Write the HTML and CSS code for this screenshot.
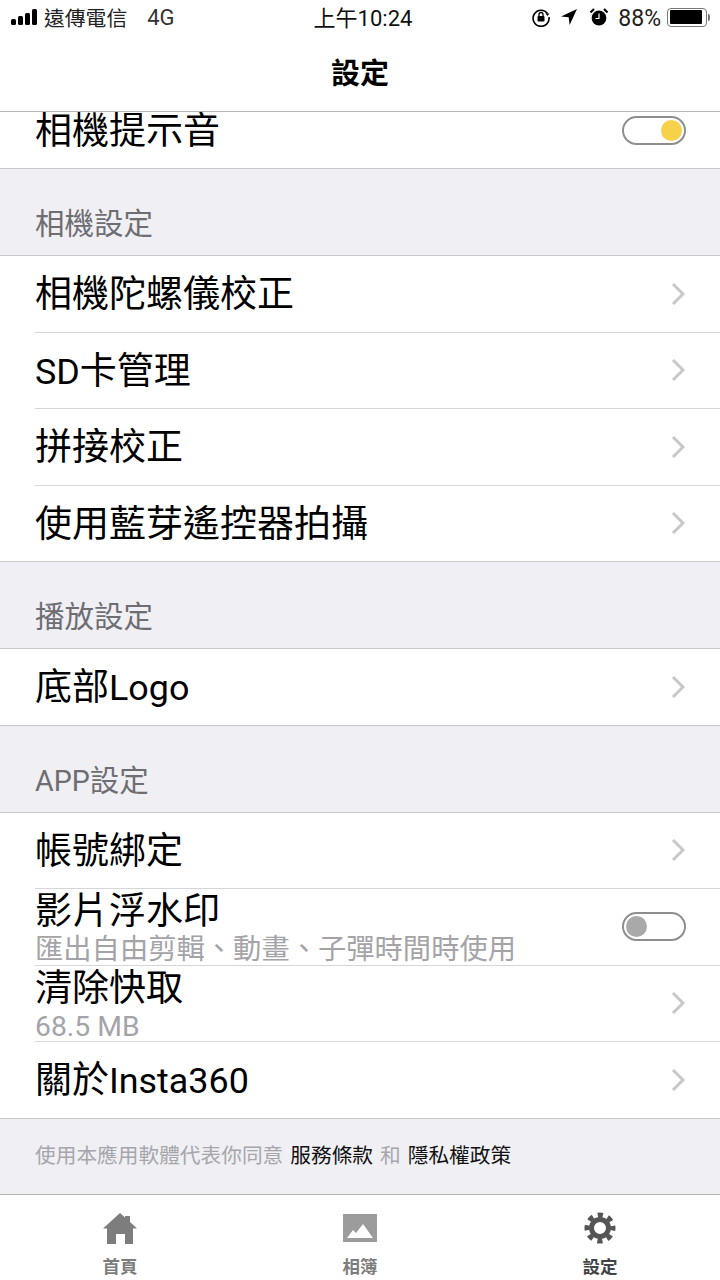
FILE: index.html
```html
<!DOCTYPE html>
<html lang="zh-Hant">
<head>
    <meta charset="UTF-8">
    <title>設定</title>
    <link rel="stylesheet" href="styles.css">
</head>
<body>
    <div class="status-bar">
        <div class="status-left">
            <div class="signal"><i class="s1"></i><i class="s2"></i><i class="s3"></i><i class="s4"></i></div>
            <span class="carrier">遠傳電信</span>
            <span class="network">4G</span>
        </div>
        <div class="status-time">上午10:24</div>
        <div class="status-right">
            <svg class="st-lock" width="20" height="20" viewBox="0 0 20 20"><path d="M16.5 6.500A8 8 0 1 0 18 10" fill="none" stroke="#000" stroke-width="1.6"/><path d="M14.500 6.500h4l-2 2.500z" fill="#000"/><rect x="6.500" y="9" width="7" height="5.500" rx="1" fill="#000"/><path d="M8 9V7.500a2 2 0 0 1 4 0V9" fill="none" stroke="#000" stroke-width="1.3"/></svg>
            <svg class="st-loc" width="18" height="18" viewBox="0 0 18 18"><path d="M17 1 1 8.500l7.700.8.9 7.700z" fill="#000"/></svg>
            <svg class="st-alarm" width="20" height="20" viewBox="0 0 20 20"><circle cx="10" cy="11" r="7.400" fill="#000"/><path d="M1.500 5.500 5 2M18.500 5.500 15 2" stroke="#000" stroke-width="2.2"/><path d="M10 6.500V11.500H6.500" fill="none" stroke="#fff" stroke-width="1.2"/></svg>
            <span class="battery-pct">88%</span>
            <div class="battery"><div class="battery-fill"></div></div>
            <div class="battery-tip"></div>
        </div>
    </div>

    <header class="nav-bar">設定</header>

    <div class="rows rows-cut">
        <div class="row row-clipped">
            <span class="row-title">相機提示音</span>
            <div class="toggle toggle-on"><i></i></div>
        </div>
    </div>

    <div class="section-head">相機設定</div>
    <div class="rows">
        <div class="row"><span class="row-title">相機陀螺儀校正</span><svg class="chev" viewBox="0 0 14 24"><path d="M2 2l10 10L2 22"/></svg></div>
        <div class="row"><span class="row-title"><span class="lat">SD</span>卡管理</span><svg class="chev" viewBox="0 0 14 24"><path d="M2 2l10 10L2 22"/></svg></div>
        <div class="row"><span class="row-title">拼接校正</span><svg class="chev" viewBox="0 0 14 24"><path d="M2 2l10 10L2 22"/></svg></div>
        <div class="row"><span class="row-title">使用藍芽遙控器拍攝</span><svg class="chev" viewBox="0 0 14 24"><path d="M2 2l10 10L2 22"/></svg></div>
    </div>

    <div class="section-head">播放設定</div>
    <div class="rows">
        <div class="row"><span class="row-title">底部<span class="lat">Logo</span></span><svg class="chev" viewBox="0 0 14 24"><path d="M2 2l10 10L2 22"/></svg></div>
    </div>

    <div class="section-head"><span class="lat">APP</span>設定</div>
    <div class="rows">
        <div class="row"><span class="row-title">帳號綁定</span><svg class="chev" viewBox="0 0 14 24"><path d="M2 2l10 10L2 22"/></svg></div>
        <div class="row">
            <div class="row-stack"><span class="row-title">影片浮水印</span><span class="row-sub">匯出自由剪輯、動畫、子彈時間時使用</span></div>
            <div class="toggle"><i></i></div>
        </div>
        <div class="row">
            <div class="row-stack"><span class="row-title">清除快取</span><span class="row-sub">68.5 MB</span></div>
            <svg class="chev" viewBox="0 0 14 24"><path d="M2 2l10 10L2 22"/></svg>
        </div>
        <div class="row"><span class="row-title">關於<span class="lat">Insta360</span></span><svg class="chev" viewBox="0 0 14 24"><path d="M2 2l10 10L2 22"/></svg></div>
    </div>

    <div class="terms">使用本應用軟體代表你同意 <b>服務條款</b> 和 <b>隱私權政策</b></div>

    <nav class="tab-bar">
        <div class="tab">
            <svg width="36" height="32" viewBox="0 0 36 32"><path d="M18 1l5 4.500V4h5v6l7 6.500h-4V32h-8V22h-9v10H5V16.500H1z" fill="#7d7d7d"/></svg>
            <span>首頁</span>
        </div>
        <div class="tab">
            <svg width="36" height="32" viewBox="0 0 36 32"><path fill-rule="evenodd" d="M1 2h34v28H1zM5 26h26L21 12l-7 9-3-3z" fill="#9c9c9c"/></svg>
            <span>相簿</span>
        </div>
        <div class="tab tab-active">
            <svg width="36" height="32" viewBox="0 0 36 32"><g fill="none" stroke="#555" stroke-width="5"><circle cx="18" cy="16" r="8.500"/><circle cx="18" cy="16" r="13" stroke-dasharray="5.200 5" stroke-dashoffset="2.600"/></g></svg>
            <span>設定</span>
        </div>
    </nav>
</body>
</html>
```

FILE: styles.css
```css
* {
    box-sizing: border-box;
}
html, body {
    margin: 0;
    padding: 0;
}
body {
    width: 720px;
    height: 1280px;
    overflow: hidden;
    display: flex;
    flex-direction: column;
    font-family: Roboto, "Noto Sans CJK TC", sans-serif;
    color: #000;
    background-color: #efeff4;
}
i {
    display: block;
}
.lat {
    font-size: .97em;
}

/* status bar */
.status-bar {
    height: 36px;
    flex: none;
    display: flex;
    align-items: center;
    justify-content: space-between;
    background-color: #fff;
    padding: 0 10px 2px 11px;
    font-size: 22px;
    position: relative;
}
.status-left, .status-right {
    display: flex;
    align-items: center;
}
.signal {
    display: flex;
    align-items: flex-end;
    gap: 2px;
    height: 16px;
    margin-right: 7px;
}
.signal i {
    width: 5px;
    background-color: #000;
    border-radius: 1.5px;
}
.s1 { height: 6px; }
.s2 { height: 9px; }
.s3 { height: 12px; }
.s4 { height: 16px; }
.carrier {
    font-size: 20.800px;
    color: #222;
}
.network {
    margin-left: 20px;
    color: #333;
}
.status-time {
    position: absolute;
    left: 0;
    right: 0;
    margin-top: -2px;
    padding-left: 6px;
    text-align: center;
    color: #111;
}
.status-right {
    position: relative;
}
.st-lock { margin-right: 9px; }
.st-loc { margin-right: 11px; }
.st-alarm { margin-right: 9px; }
.battery-pct {
    margin-right: 6px;
    padding-top: 2px;
    font-size: 23px;
    color: #222;
}
.battery {
    width: 40px;
    height: 19px;
    border: 1.5px solid #777;
    border-radius: 4px;
    padding: 1.5px;
}
.battery-fill {
    width: 92%;
    height: 100%;
    background-color: #000;
    border-radius: 1px;
}
.battery-tip {
    width: 2px;
    height: 7px;
    margin-left: 1px;
    background-color: #777;
    border-radius: 0 2px 2px 0;
}

/* nav bar */
.nav-bar {
    height: 76px;
    flex: none;
    padding-bottom: 6px;
    display: flex;
    align-items: center;
    justify-content: center;
    background-color: #fff;
    font-size: 29px;
    font-weight: bold;
    border-bottom: 1px solid #b4b4b4;
}

/* rows */
.rows {
    flex: none;
    background-color: #fff;
    border-top: 1px solid #c8c7cc;
    border-bottom: 1px solid #c8c7cc;
    padding-left: 35px;
}
.rows-cut {
    border-top: 0;
}
.row {
    height: 76.500px;
    display: flex;
    align-items: center;
    justify-content: space-between;
    padding-right: 35px;
    border-bottom: 1px solid #d6d6da;
}
.row:last-child {
    border-bottom: 0;
    height: 75.500px;
}
.row > .row-title {
    margin-top: 3px;
}
.row-clipped {
    height: 56px;
    padding-bottom: 20px;
}
.row-clipped:last-child {
    height: 56px;
}
.row-clipped > .row-title {
    margin-top: 4px;
}
.row-title {
    font-size: 37px;
    line-height: 44px;
}
.row-stack {
    display: flex;
    flex-direction: column;
    height: 100%;
    padding-top: 1px;
}
.row-sub {
    font-size: 28.300px;
    line-height: 30px;
    color: #a4a4a8;
    margin-top: 1px;
}
.chev {
    width: 14px;
    height: 24px;
    fill: none;
    stroke: #c7c7cc;
    stroke-width: 3;
}

/* toggles */
.toggle {
    width: 64px;
    height: 29px;
    margin-right: -1px;
    border: 2px solid #8e8e8e;
    border-radius: 15px;
    padding: 2px;
    background-color: #fff;
    display: flex;
}
.toggle i {
    width: 21px;
    height: 21px;
    border-radius: 50%;
    background-color: #a9a9a9;
}
.toggle-on {
    justify-content: flex-end;
}
.toggle-on i {
    background-color: #f6d149;
}

.section-head {
    height: 86px;
    flex: none;
    padding: 0 35px 12px;
    display: flex;
    align-items: flex-end;
    font-size: 29.500px;
    line-height: 38px;
    color: #6d6d72;
}
.terms {
    height: 75px;
    flex: none;
    padding: 0 35px 4px;
    display: flex;
    align-items: center;
    gap: 7px;
    font-size: 20.700px;
    color: #a6a6aa;
}
.terms b {
    font-weight: normal;
    color: #111;
}

/* tab bar */
.tab-bar {
    flex: 1;
    display: grid;
    grid-template-columns: repeat(3, 1fr);
    background-color: #fff;
    border-top: 1px solid #b4b4b4;
}
.tab {
    display: flex;
    flex-direction: column;
    align-items: center;
    padding-top: 17px;
    gap: 9px;
    font-size: 17.500px;
    font-weight: bold;
    color: #7d7d7d;
}
.tab-active {
    color: #444;
}
```
